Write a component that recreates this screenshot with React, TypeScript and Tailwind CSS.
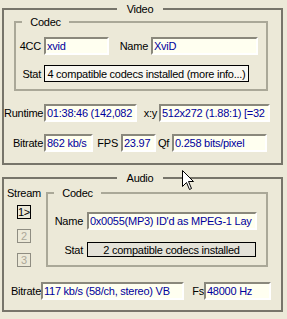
import type { FC, ReactNode } from "react";

const edit =
  "flex h-[18px] items-center overflow-hidden whitespace-nowrap border-2 border-t-[#8a887c] border-l-[#8a887c] border-r-white border-b-white bg-[#fffff0] pl-px text-[#00009c]";

const Edit: FC<{ className: string; children: ReactNode }> = ({ className, children }) => (
  <div className={`${edit} ${className}`}>{children}</div>
);

const Label: FC<{ className: string; children: ReactNode }> = ({ className, children }) => (
  <span className={`shrink-0 whitespace-nowrap text-right ${className}`}>{children}</span>
);

const Title: FC<{ className: string; w: string; children: ReactNode }> = ({ className, w, children }) => (
  <legend className={`p-0 leading-[12px] ${className}`}>
    <span className={`block text-center ${w}`}>{children}</span>
  </legend>
);

const Cursor = () => (
  <svg className="absolute left-[182px] top-[170px]" width="13" height="21" viewBox="0 0 13 21">
    <path d="M0.5 0.5 L0.5 16.5 L4.5 12.5 L7.5 19.5 L9.5 18.5 L6.5 11.5 L11.5 11.5 Z" fill="#fff" stroke="#000" strokeWidth="1" />
  </svg>
);

export default function App() {
  return (
    <div className="relative h-[319px] w-[287px] overflow-hidden bg-[#ece9d8] pl-[2px] pt-[3px] font-['Liberation_Sans',Arial,sans-serif] text-[11px] leading-[14px] tracking-[-0.25px] text-black">
      {/* Video */}
      <fieldset className="w-[281px] border-2 border-[#77756a]">
        <Title className="ml-[113px]" w="w-[46px]">Video</Title>
        <div className="pb-[11px]">
          <fieldset className="ml-[10px] mt-px w-[254px] border-2 border-[#aaa898]">
            <Title className="ml-[6px]" w="w-[47px]">Codec</Title>
            <div className="pb-[7px]">
              <div className="mt-[9px] flex items-center">
                <Label className="w-[25px]">4CC</Label>
                <Edit className="ml-[3px] w-[65px]">xvid</Edit>
                <Label className="w-[39px]">Name</Label>
                <Edit className="ml-[3px] w-[107px]">XviD</Edit>
              </div>
              <div className="mt-[10px] flex items-center">
                <Label className="w-[25px]">Stat</Label>
                <div className="ml-[3px] flex h-[17px] w-[205px] items-center justify-center whitespace-nowrap border border-black bg-[#f8f7f0]">
                  4 compatible codecs installed (more info...)
                </div>
              </div>
            </div>
          </fieldset>
          <div className="mt-[13px] flex items-center">
            <Label className="w-[39px]">Runtime</Label>
            <Edit className="ml-px w-[93px]">01:38:46 (142,082</Edit>
            <Label className="w-[20px]">x:y</Label>
            <Edit className="ml-[2px] w-[111px]">512x272 (1.88:1) [=32</Edit>
          </div>
          <div className="mt-[12px] flex items-center">
            <Label className="w-[39px]">Bitrate</Label>
            <Edit className="ml-px w-[49px]">862 kb/s</Edit>
            <Label className="w-[25px]">FPS</Label>
            <Edit className="ml-[3px] w-[35px]">23.97</Edit>
            <Label className="w-[13px]">Qf</Label>
            <Edit className="ml-[3px] w-[95px]">0.258 bits/pixel</Edit>
          </div>
        </div>
      </fieldset>

      {/* Audio */}
      <fieldset className="mt-[7px] w-[281px] border-2 border-[#77756a]">
        <Title className="ml-[113px]" w="w-[46px]">Audio</Title>
        <div className="pb-[10px]">
          <div className="mt-[3px] flex">
            <div className="flex w-[40px] flex-col items-center">
              <span className="leading-[12px]">Stream</span>
              <div className="mt-[6px] flex h-[14px] w-[14px] items-center justify-center border border-black leading-[12px]">1&gt;</div>
              <div className="mt-[10px] flex h-[14px] w-[14px] items-center justify-center border border-[#8f8d82] leading-[12px] text-[#aca899]">2</div>
              <div className="mt-[10px] flex h-[14px] w-[14px] items-center justify-center border border-[#8f8d82] leading-[12px] text-[#aca899]">3</div>
            </div>
            <fieldset className="ml-[2px] w-[222px] border-2 border-[#aaa898]">
              <Title className="ml-[6px]" w="w-[47px]">Codec</Title>
              <div className="pb-[6px]">
                <div className="mt-[13px] flex items-center">
                  <Label className="w-[35px]">Name</Label>
                  <Edit className="ml-[4px] w-[170px]">0x0055(MP3) ID'd as MPEG-1 Lay</Edit>
                </div>
                <div className="mt-[12px] flex items-center">
                  <Label className="w-[35px]">Stat</Label>
                  <div className="ml-[4px] flex h-[15px] w-[169px] items-center justify-center whitespace-nowrap border border-black bg-[#e4e2d8]">
                    2 compatible codecs installed
                  </div>
                </div>
              </div>
            </fieldset>
          </div>
          <div className="mt-[15px] flex items-center">
            <Label className="w-[37px]">Bitrate</Label>
            <Edit className="w-[143px]">117 kb/s (58/ch, stereo) VB</Edit>
            <Label className="w-[20px]">Fs</Label>
            <Edit className="w-[67px]">48000 Hz</Edit>
          </div>
        </div>
      </fieldset>
      <Cursor />
    </div>
  );
}
